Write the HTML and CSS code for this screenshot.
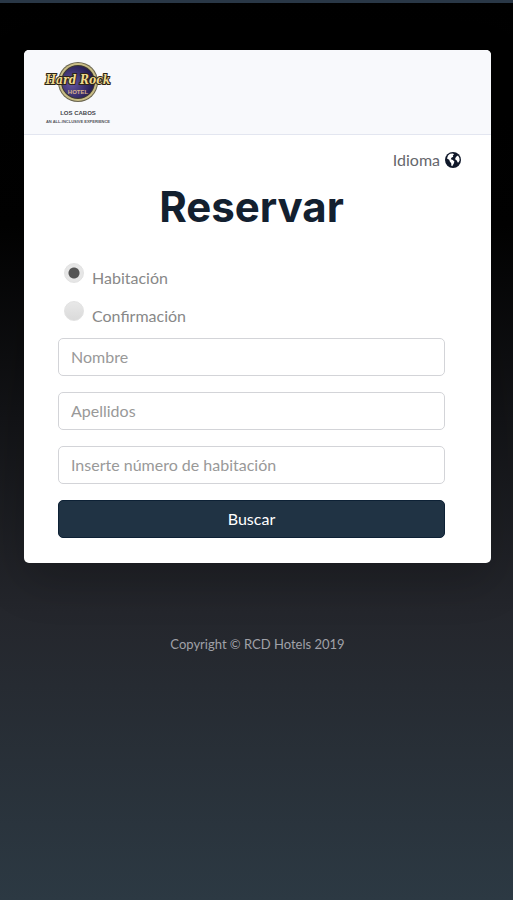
FILE: index.html
```html
<!DOCTYPE html>
<html lang="es">
<head>
  <meta charset="UTF-8">
  <meta name="viewport" content="width=device-width, initial-scale=1.0">
  <title>Reservar</title>
  <link rel="stylesheet" href="styles.css">
</head>
<body>
  <main class="card">
    <header class="card-header">
      <svg class="logo" viewBox="0 0 70 62" role="img" aria-label="Hard Rock Hotel Los Cabos">
        <defs>
          <radialGradient id="disc" cx="30%" cy="55%" r="75%">
            <stop offset="0" stop-color="#63549f"/>
            <stop offset="1" stop-color="#1d1647"/>
          </radialGradient>
        </defs>
        <circle cx="34" cy="20" r="20" fill="#6b6650"/>
        <circle cx="34" cy="20" r="19" fill="#c9bd86"/>
        <circle cx="34" cy="20" r="17" fill="#3c3830"/>
        <circle cx="34" cy="20" r="16" fill="url(#disc)"/>
        <text class="logo-name" x="34" y="22" text-anchor="middle">Hard Rock</text>
        <text class="logo-hotel" x="34" y="32" text-anchor="middle">HOTEL</text>
        <text class="logo-place" x="34" y="53" text-anchor="middle">LOS CABOS</text>
        <text class="logo-tag" x="34" y="61" text-anchor="middle">AN ALL-INCLUSIVE EXPERIENCE</text>
      </svg>
    </header>

    <div class="card-body">
      <a class="language" href="#">
        Idioma
        <svg class="globe" viewBox="0 0 16 16" aria-hidden="true">
          <circle cx="8" cy="8" r="8" fill="#10182a"/>
          <path fill="#fff" d="M3 3.4 L5 1.8 L8 1.4 L9 2.4 L7.8 3.4 L8.2 4.8 L6.4 5.8 L5.8 7.2 L7.8 8 L9.4 9.4 L8.8 11.4 L7.2 14.2 L6.4 13.8 L6.2 11.2 L4.8 9.6 L4.2 7.8 L2 6.4 Z"/>
          <path fill="#fff" d="M11.4 4.4 L13 3.6 L14.4 6 L14.6 8.4 L13.4 10.4 L12.4 10.2 L12 8.6 L10.6 8 L10.2 6.2 Z"/>
        </svg>
      </a>

      <h1>Reservar</h1>

      <form class="form">
        <div class="options">
          <label class="option"><input type="radio" name="type" checked> <span>Habitación</span></label>
          <label class="option"><input type="radio" name="type"> <span>Confirmación</span></label>
        </div>
        <input class="field" type="text" placeholder="Nombre" aria-label="Nombre">
        <input class="field" type="text" placeholder="Apellidos" aria-label="Apellidos">
        <input class="field" type="text" placeholder="Inserte número de habitación" aria-label="Inserte número de habitación">
        <button class="submit" type="button">Buscar</button>
      </form>
    </div>
  </main>

  <footer>Copyright © RCD Hotels 2019</footer>
</body>
</html>
```
FILE: styles.css
```css
* { box-sizing: border-box; }
html { min-height: 100%; background: linear-gradient(#000 0%, #020202 25%, #24262c 68%, #2c3943 100%); }
body { margin: 0; padding: 47px 22px 32px 24px; border-top: 3px solid #293746; font-family: Lato, "Liberation Sans", sans-serif; font-size: 16px; line-height: 24px; color: #888; }
.card { background: #fff; border-radius: 5px; overflow: hidden; box-shadow: 0 16px 48px rgba(0,0,0,0.2); }
.card-header { padding: 12px 20px 10px; background: #f8f9fc; border-bottom: 1px solid #e3e6f0; }
.logo { display: block; width: 70px; height: 62px; overflow: visible; }
.logo-name { font: italic bold 12px "DejaVu Serif Condensed", "DejaVu Serif", serif; fill: #efd98d; stroke: #2c2417; stroke-width: 2px; paint-order: stroke; }
.logo-hotel { font: bold 6px "Liberation Sans", sans-serif; fill: #d8b08c; }
.logo-place { font: bold 6px "Liberation Sans", sans-serif; fill: #45454b; }
.logo-tag { font: bold 4px "Liberation Sans", sans-serif; fill: #55555c; }
.card-body { padding: 13px 46px 25px 34px; }
.language { display: flex; justify-content: flex-end; align-items: center; gap: 5px; margin-right: -16px; color: #66676c; text-decoration: none; }
.globe { width: 16px; height: 16px; }
h1 { margin: 10px 0 30px; font-family: Inter, "Liberation Sans", sans-serif; font-size: 42px; line-height: 50px; font-weight: 700; text-align: center; color: #13202f; }
.form { display: flex; flex-direction: column; gap: 16px; }
.options { margin-bottom: -16px; }
.option { display: flex; align-items: flex-start; gap: 8px; height: 38px; padding-left: 6px; }
.option span { padding-top: 4px; }
.option input { appearance: none; width: 20px; height: 20px; margin: 1px 0 0; border: 1px solid #e2e2e2; border-radius: 50%; background: linear-gradient(#e8e8e8, #dadada); }
.option input:checked { background: radial-gradient(circle, #555 0 5px, #e6e6e6 6px); }
.field { width: 100%; height: 38px; padding: 5px 12px 7px; border: 1px solid #d3d4d8; border-radius: 5px; font: inherit; color: #6e707e; }
.field::placeholder { color: #999; opacity: 1; }
.submit { height: 38px; border: 1px solid #0d2135; border-radius: 5px; background: #203344; color: #fff; font: inherit; cursor: pointer; }
footer { margin-top: 69px; font-size: 13px; line-height: 24px; text-align: center; color: #a0a1a8; }
```
